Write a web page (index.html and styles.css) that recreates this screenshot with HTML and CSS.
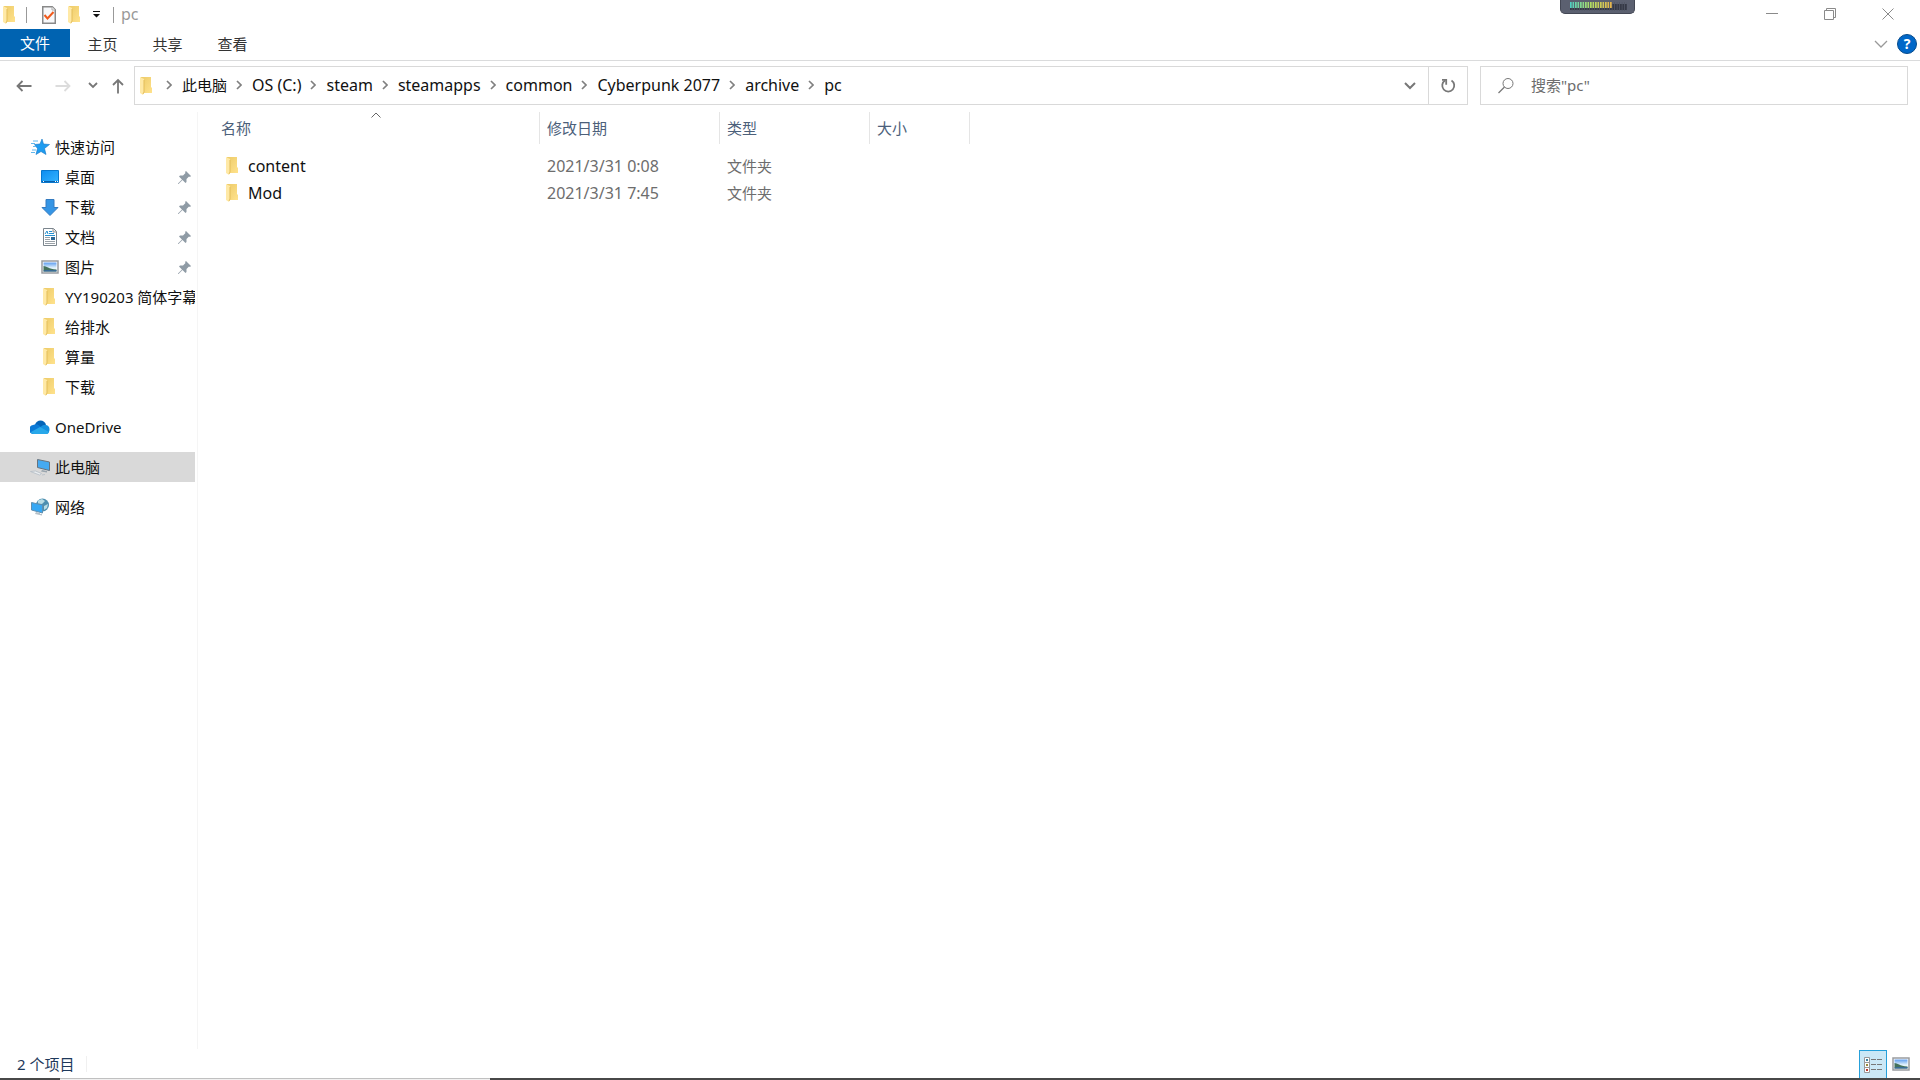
FILE: index.html
```html
<!DOCTYPE html>
<html lang="zh-CN">
<head>
<meta charset="utf-8">
<title>pc</title>
<link rel="stylesheet" href="styles.css">
</head>
<body>
<svg class="defs" aria-hidden="true">
  <defs>
    <linearGradient id="gold" x1="0" x2="1" y1="0" y2="1"><stop offset="0" stop-color="#edcb69"/><stop offset="1" stop-color="#ffe28c"/></linearGradient>
    <linearGradient id="blue" x1="0" x2="1" y1="0" y2="1"><stop offset="0" stop-color="#0d8df0"/><stop offset="1" stop-color="#35b4ff"/></linearGradient>
    <linearGradient id="sky" x1="0" x2="0" y1="0" y2="1"><stop offset="0" stop-color="#5d9df0"/><stop offset=".6" stop-color="#e4f3fb"/></linearGradient>
    <symbol id="folder" viewBox="0 0 12 18"><path d="M1 0h10v10l1 1v5H1z" fill="url(#gold)"/><path d="M0 0l4 2v13l-1 3-3-2z" fill="#ffe9a6"/><path d="M4 3v12l-1 2" fill="none" stroke="#e3bd5b"/></symbol>
    <symbol id="crumb" viewBox="0 0 6 10"><path d="M1 1l4 4-4 4" fill="none" stroke="#808080" stroke-width="1.7"/></symbol>
    <symbol id="pin" viewBox="0 0 13 13"><path d="M8 0l5 5-1 1-1-.5-2.500 2.500V11l-1 1-3-3L.5 13H0v-.5L4 8.500 1 5.500l1-1h3L7.500 2 7 1z" fill="#8f9ba5"/></symbol>
    <symbol id="picture" viewBox="0 0 18 14"><path d="M1 1h16v12H1z" fill="#fff" stroke="#999ca0" stroke-width="1.500"/><path d="M2.500 2.500h13v9h-13z" fill="url(#sky)"/><path d="M2.500 6c3 0 5 3 13 3.500v2h-13z" fill="#44725c"/><path d="M2.500 10.500c5-1 8 0 13-.5v1.500h-13z" fill="#386b9b"/></symbol>
  </defs>
</svg>

<header class="titlebar">
  <div class="quick">
    <svg class="folder"><use href="#folder"/></svg>
    <span class="rule"></span>
    <button class="plain props" aria-label="属性"><svg width="14" height="18" viewBox="0 0 14 18"><path d="M.75.75h9.500l3 3v13.500H.75z" fill="#f7f8fa" stroke="#898989" stroke-width="1.500"/><path d="M10 1v3h3" fill="#fff" stroke="#aaa"/><path d="M2.500 9l3 3.500L11.500 6" fill="none" stroke="#f05a1c" stroke-width="2"/></svg></button>
    <button class="plain newdir" aria-label="新建文件夹"><svg class="folder"><use href="#folder"/></svg></button>
    <button class="plain more" aria-label="自定义快速访问工具栏"><svg width="7" height="7"><path d="M0 0h7v1H0zM0 3h7L3.500 6.500z" fill="#111"/></svg></button>
    <span class="rule"></span>
    <h1 class="title">pc</h1>
  </div>
  <div class="window-buttons">
    <button class="plain" aria-label="最小化"><svg width="12" height="12"><path d="M0 5.500h12" stroke="#8a8a8a"/></svg></button>
    <button class="plain" aria-label="还原"><svg width="12" height="12"><path d="M.5 2.500h9v9h-9zM2.500 2V.5h9v9H10" fill="none" stroke="#8a8a8a"/></svg></button>
    <button class="plain" aria-label="关闭"><svg width="12" height="12"><path d="M.5.5l11 11M11.500.5l-11 11" stroke="#8a8a8a"/></svg></button>
  </div>
  <div class="meter"><svg width="57" height="9" viewBox="0 0 57 9">
    <defs><linearGradient id="level"><stop offset="0" stop-color="#4ed0c4"/><stop offset=".5" stop-color="#b2dd62"/><stop offset="1" stop-color="#e8b44c"/></linearGradient>
    <pattern id="bars" width="2.500" height="9" patternUnits="userSpaceOnUse"><path d="M1.700 0h.8v9h-.8z" fill="#515665"/></pattern></defs>
    <path d="M0 2h57v6H0z" fill="#353946"/><path d="M0 0h42v6H0z" fill="url(#level)"/><path d="M0 0h57v9H0z" fill="url(#bars)"/></svg></div>
</header>

<nav class="ribbon" aria-label="功能区">
  <button class="tab file">文件</button>
  <button class="tab">主页</button>
  <button class="tab">共享</button>
  <button class="tab">查看</button>
  <div class="ribbon-end">
    <button class="plain" aria-label="展开功能区"><svg width="14" height="8"><path d="M1 1l6 6 6-6" fill="none" stroke="#999" stroke-width="1.300"/></svg></button>
    <button class="help" aria-label="帮助">?</button>
  </div>
</nav>

<div class="navbar">
  <div class="history">
    <button class="plain" aria-label="后退"><svg width="16" height="12"><path d="M15.500 6H1.500M6.500 1l-5 5 5 5" fill="none" stroke="#777" stroke-width="1.800"/></svg></button>
    <button class="plain" aria-label="前进"><svg width="16" height="12"><path d="M.5 6h14M9.500 1l5 5-5 5" fill="none" stroke="#dcdcdc" stroke-width="1.800"/></svg></button>
    <button class="plain recent" aria-label="最近浏览的位置"><svg width="10" height="7"><path d="M1 1l4 4 4-4" fill="none" stroke="#777" stroke-width="1.800"/></svg></button>
    <button class="plain up" aria-label="上移"><svg width="12" height="16"><path d="M6 15.500V1.500M1 7l5-5 5 5" fill="none" stroke="#777" stroke-width="1.800"/></svg></button>
  </div>
  <div class="address">
    <svg class="folder"><use href="#folder"/></svg>
    <ol class="crumbs">
      <li><svg><use href="#crumb"/></svg><a href="#">此电脑</a></li>
      <li><svg><use href="#crumb"/></svg><a class="latin" href="#">OS (C:)</a></li>
      <li><svg><use href="#crumb"/></svg><a class="latin" href="#">steam</a></li>
      <li><svg><use href="#crumb"/></svg><a class="latin" href="#">steamapps</a></li>
      <li><svg><use href="#crumb"/></svg><a class="latin" href="#">common</a></li>
      <li><svg><use href="#crumb"/></svg><a class="latin" href="#">Cyberpunk 2077</a></li>
      <li><svg><use href="#crumb"/></svg><a class="latin" href="#">archive</a></li>
      <li><svg><use href="#crumb"/></svg><a class="latin" href="#">pc</a></li>
    </ol>
    <button class="plain drop" aria-label="以前的位置"><svg width="12" height="8"><path d="M1 1l5 5 5-5" fill="none" stroke="#777" stroke-width="2"/></svg></button>
    <button class="plain refresh" aria-label="刷新"><svg width="16" height="16" viewBox="0 0 16 16"><path d="M11.500 2.500a6 6 0 1 1-6.500 0" fill="none" stroke="#777" stroke-width="1.800"/><path d="M2 1.800h4.200v5" fill="none" stroke="#777" stroke-width="1.800"/></svg></button>
  </div>
  <label class="search">
    <svg width="16" height="16"><circle cx="10" cy="5.500" r="5" fill="none" stroke="#777"/><path d="M6.500 9L.5 15" stroke="#777" stroke-width="1.200"/></svg>
    <input type="text" placeholder='搜索"pc"' aria-label="搜索">
  </label>
</div>

<main class="explorer">
  <nav class="sidebar" aria-label="导航窗格">
    <ul class="group">
      <li><a class="place root" href="#"><svg width="20" height="16" viewBox="0 0 20 16"><path d="M12 0l1.500 5 6 .5-5 4 1.500 6-5-3-5 3 1.500-6L4.500 5.500 10 5z" fill="#1e9cf0" stroke="#1576c4" stroke-width=".6"/><path d="M3 2h5M1 4.500h4M3 7.500h3M2 11h4M1 13.500h4" stroke="#61b7ed"/></svg>快速访问</a></li>
      <li><a class="place" href="#"><svg width="18" height="14"><path d="M.5.5h17v12H.5z" fill="url(#blue)" stroke="#0878ce"/><path d="M1 11.500h16" stroke="#075ea8"/><path d="M2 11.500h1M14 11.500h1M16 11.500h1" stroke="#fff"/></svg><span>桌面</span><svg class="pin"><use href="#pin"/></svg></a></li>
      <li><a class="place" href="#"><svg width="18" height="17"><path d="M5 .5h8v8h4L9 16.500 1 8.500h4z" fill="#3595e5" stroke="#347bc0"/></svg><span>下载</span><svg class="pin"><use href="#pin"/></svg></a></li>
      <li><a class="place" href="#"><svg width="18" height="18"><path d="M2.500.5h10l3 3v14h-13z" fill="#fff" stroke="#7b858d"/><path d="M12 1v3h3" fill="#ddd" stroke="#999"/><path d="M4 6l2-3 1 3M8 3.500h3M8 5.500h5M4 7.500h10" stroke="#2790cf" fill="none"/><path d="M4 9.500h5M4 11.500h5M4 13.500h10M4 15.500h10" stroke="#9aa1a7"/><path d="M10 9h4v3h-4z" fill="#2c6795"/></svg><span>文档</span><svg class="pin"><use href="#pin"/></svg></a></li>
      <li><a class="place" href="#"><svg width="18" height="14"><use href="#picture"/></svg><span>图片</span><svg class="pin"><use href="#pin"/></svg></a></li>
      <li><a class="place" href="#"><svg class="folder"><use href="#folder"/></svg><span>YY190203 简体字幕</span></a></li>
      <li><a class="place" href="#"><svg class="folder"><use href="#folder"/></svg><span>给排水</span></a></li>
      <li><a class="place" href="#"><svg class="folder"><use href="#folder"/></svg><span>算量</span></a></li>
      <li><a class="place" href="#"><svg class="folder"><use href="#folder"/></svg><span>下载</span></a></li>
    </ul>
    <ul class="group">
      <li><a class="place root" href="#"><svg width="20" height="14"><path d="M5 5c1-6 10-6 11 0L9 10z" fill="#0364b8"/><path d="M4 14a4 4 0 0 1-1-9c4-2 6 0 8 2l5 6z" fill="#0a7ad7"/><path d="M10 8c2-4 6-3 6-3 4 0 5 7 1 9z" fill="#1490df"/><path d="M1 12l9-5 9 5c-1 2-2 2-3 2H4c-2 0-3-1-3-2z" fill="#28a8ea"/></svg>OneDrive</a></li>
    </ul>
    <ul class="group">
      <li><a class="place root selected" href="#" aria-current="page"><svg width="20" height="18"><path d="M7.500 1.500l12 2.500v8.500l-12-3z" fill="#45aaf2" stroke="#68737d"/><path d="M12 12l5 1v1.500l-6-1z" fill="#9aa5ae"/><path d="M.5 13.500l5-.5 6 2.500-2 1.500zM12 17l3-.5" fill="#e9edf0" stroke="#b4bdc5" stroke-width=".8"/></svg>此电脑</a></li>
    </ul>
    <ul class="group">
      <li><a class="place root" href="#"><svg width="20" height="18"><circle cx="12.500" cy="7" r="6.500" fill="#4d8fb0"/><path d="M8 2.500l4-1.500 3 2-3 3-4-.5zM14 8l4-2-1 4-3 2z" fill="#b9dce4"/><path d="M1.500 4.500L12.500 7v8l-11-3z" fill="#36a8f4" stroke="#5f8fb0"/><path d="M6 14l4 1v1h2v1.500L5 16z" fill="#b5c0c8"/></svg>网络</a></li>
    </ul>
  </nav>

  <section class="content">
    <table class="files">
      <colgroup><col class="c-name"><col class="c-date"><col class="c-type"><col class="c-size"></colgroup>
      <thead>
        <tr>
          <th scope="col" aria-sort="ascending">名称<svg class="sort" width="10" height="6"><path d="M.5 5.500L5 1l4.500 4.500" fill="none" stroke="#666"/></svg></th>
          <th scope="col">修改日期</th>
          <th scope="col">类型</th>
          <th scope="col">大小</th>
        </tr>
      </thead>
      <tbody>
        <tr><td><a class="entry latin" href="#"><svg class="folder"><use href="#folder"/></svg>content</a></td><td class="latin">2021/3/31 0:08</td><td>文件夹</td><td></td></tr>
        <tr><td><a class="entry latin" href="#"><svg class="folder"><use href="#folder"/></svg>Mod</a></td><td class="latin">2021/3/31 7:45</td><td>文件夹</td><td></td></tr>
      </tbody>
    </table>
  </section>
</main>

<footer class="status">
  <span class="count">2 个项目</span>
  <div class="views">
    <button class="plain view active" aria-label="详细信息"><svg width="18" height="16"><path d="M.5.5h5v5h-5zM.5 5.500h5v5h-5zM.5 10.500h5v5h-5z" fill="#fff" stroke="#999"/><path d="M2 2h2v2H2z" fill="#3b82a0"/><path d="M2 7h2v2H2z" fill="#9a8b3d"/><path d="M2 12h2v2H2z" fill="#c0392b"/><path d="M7 2.500h5M13 2.500h5M7 7.500h5M13 7.500h5M7 12.500h5M13 12.500h5" stroke="#777"/></svg></button>
    <button class="plain view" aria-label="大图标"><svg width="18" height="14"><use href="#picture"/></svg></button>
  </div>
</footer>
<div class="taskbar-edge"><span></span></div>
</body>
</html>
```
FILE: styles.css
```css
* { box-sizing: border-box; }

body {
  margin: 0;
  min-height: 100vh;
  display: flex;
  flex-direction: column;
  background: #fff;
  color: #111;
  font: 15px/20px "Noto Sans", "Noto Sans CJK SC", sans-serif;
}

svg { display: block; flex: none; }
a { color: inherit; text-decoration: none; }
ul, ol { list-style: none; margin: 0; padding: 0; }
.defs { position: absolute; width: 0; height: 0; }
.folder { width: 12px; height: 18px; }
.latin { font-size: 16px; }

.plain {
  display: flex;
  align-items: center;
  justify-content: center;
  padding: 0;
  border: 0;
  background: none;
}

/* Title bar */
.titlebar {
  position: relative;
  display: flex;
  justify-content: space-between;
  height: 29px;
}
.quick { display: flex; align-items: center; padding-left: 3px; }
.rule { width: 1px; height: 16px; background: #999; }
.quick .folder + .rule { margin-left: 11px; }
.props { margin-left: 15px; }
.newdir { margin-left: 12px; }
.more { margin: 0 13px; }
.title { margin: 0 0 0 7px; padding-bottom: 2px; font-size: 16px; font-weight: 400; color: #999; }
.window-buttons { display: flex; padding: 0 3px 2px 0; }
.window-buttons .plain { width: 58px; }
.meter {
  position: absolute;
  top: 0;
  right: 285px;
  width: 75px;
  height: 14px;
  padding: 2px 9px;
  border: 1px solid #434754;
  border-top: 0;
  border-radius: 0 0 5px 5px;
  background: #5b6070;
}

/* Ribbon */
.ribbon {
  display: flex;
  height: 32px;
  border-bottom: 1px solid #dadbdc;
}
.tab {
  width: 65px;
  height: 30px;
  padding: 0;
  border: 0;
  background: none;
  color: #333;
  font: inherit;
}
.file { width: 70px; height: 28px; background: #0063b1; color: #fff; }
.ribbon-end {
  display: flex;
  align-items: center;
  gap: 9px;
  height: 30px;
  margin-left: auto;
  padding-right: 3px;
}
.help {
  width: 20px;
  height: 20px;
  padding: 0;
  border: 1px solid #064b8c;
  border-radius: 50%;
  background: #0067c8;
  color: #fff;
  font: bold 14px/18px "Noto Sans", sans-serif;
}

/* Navigation bar */
.navbar {
  display: flex;
  padding: 5px 12px 7px 0;
}
.history {
  display: flex;
  align-items: center;
  width: 134px;
  padding-left: 16px;
}
.history .plain + .plain { margin-left: 23px; }
.history .recent.plain { margin-left: 17px; }
.history .up.plain { margin-left: 14px; }
.address {
  display: flex;
  flex: 1;
  align-items: center;
  height: 39px;
  padding-left: 5px;
  border: 1px solid #d9d9d9;
}
.crumbs { display: flex; flex: 1; gap: 9px; margin-left: 14px; padding-bottom: 2px; }
.crumbs li { display: flex; align-items: center; }
.crumbs svg { width: 6px; height: 10px; margin-right: 10px; }
.drop { width: 36px; }
.refresh { width: 39px; height: 37px; border-left: 1px solid #d9d9d9; }
.search {
  display: flex;
  align-items: center;
  width: 428px;
  margin-left: 12px;
  padding-left: 17px;
  border: 1px solid #d9d9d9;
}
.search input {
  flex: 1;
  min-width: 0;
  margin-left: 17px;
  padding: 0 0 2px;
  border: 0;
  outline: 0;
  background: none;
  font: inherit;
}
.search input::placeholder { color: #6d6d6d; opacity: 1; }

/* Folder tree and file list */
.explorer { display: flex; flex: 1; margin-bottom: 1px; }
.sidebar {
  width: 198px;
  padding: 20px 2px 0 0;
  border-right: 1px solid #f5f5f5;
}
.group + .group { margin-top: 10px; }
.place {
  display: flex;
  align-items: center;
  height: 30px;
  padding-left: 41px;
  white-space: nowrap;
  overflow: hidden;
}
.place span { margin-left: 6px; }
.place .folder { margin: 0 4px 0 2px; }
.place .pin { width: 13px; height: 13px; margin: 0 4px 0 auto; }
.place.root { gap: 5px; padding-left: 30px; }
.selected { background: #d9d9d9; }

.content { flex: 1; }
.files { width: 772px; table-layout: fixed; border-spacing: 0; }
.c-name { width: 342px; }
.c-date { width: 180px; }
.c-type { width: 150px; }
.c-size { width: 100px; }
.files th {
  position: relative;
  height: 32px;
  padding: 0 0 0 7px;
  border-right: 1px solid #e5e5e5;
  color: #4c607a;
  font-weight: 400;
  text-align: left;
}
.files tbody::before { content: ""; display: block; height: 8px; }
.files td { height: 27px; padding: 0 0 0 7px; color: #6d6d6d; }
.files th:first-child { padding-left: 23px; }
.files td:first-child { padding-left: 28px; }
.sort { position: absolute; top: 0; left: 173px; }
.entry { display: flex; align-items: center; gap: 10px; color: #111; }

/* Status bar */
.status {
  display: flex;
  align-items: center;
  justify-content: space-between;
  height: 28px;
  padding-left: 17px;
  color: #1e395b;
}
.count { padding-right: 12px; border-right: 1px solid #f0f0f0; line-height: 16px; }
.views { display: flex; padding-right: 5px; }
.view { width: 28px; height: 28px; }
.active { border: 1px solid #26a0da; border-bottom: 0; background: #cbe8f6; }
.taskbar-edge { height: 2px; padding-left: 60px; background: #484848; }
.taskbar-edge span { display: block; width: 430px; height: 2px; border-top: 1px solid #c0c0c0; background: #f0f0f0; }
```
